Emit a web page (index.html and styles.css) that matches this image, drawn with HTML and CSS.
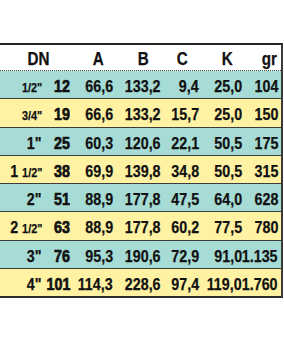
FILE: index.html
```html
<!DOCTYPE html>
<html>
<head>
<meta charset="utf-8">
<link rel="stylesheet" href="styles.css">
</head>
<body>
<div class="table">
  <div class="row head">
    <div class="h dn"><span class="n">DN</span></div>
    <div class="h ha"><span class="n">A</span></div>
    <div class="h hb"><span class="n">B</span></div>
    <div class="h hc"><span class="n">C</span></div>
    <div class="h hk"><span class="n">K</span></div>
    <div class="h hg"><span class="n">gr</span></div>
  </div>
  <div class="row teal"><div class="c inch"><span class="n"><span class="fr">1/2"</span></span></div><div class="c mm"><span class="n">12</span></div><div class="c"><span class="n">66,6</span></div><div class="c"><span class="n">133,2</span></div><div class="c"><span class="n">9,4</span></div><div class="c"><span class="n">25,0</span></div><div class="c"><span class="n">104</span></div></div>
  <div class="row yellow"><div class="c inch"><span class="n"><span class="fr">3/4"</span></span></div><div class="c mm"><span class="n">19</span></div><div class="c"><span class="n">66,6</span></div><div class="c"><span class="n">133,2</span></div><div class="c"><span class="n">15,7</span></div><div class="c"><span class="n">25,0</span></div><div class="c"><span class="n">150</span></div></div>
  <div class="row teal"><div class="c inch"><span class="n">1"</span></div><div class="c mm"><span class="n">25</span></div><div class="c"><span class="n">60,3</span></div><div class="c"><span class="n">120,6</span></div><div class="c"><span class="n">22,1</span></div><div class="c"><span class="n">50,5</span></div><div class="c"><span class="n">175</span></div></div>
  <div class="row yellow"><div class="c inch"><span class="n">1 <span class="fr">1/2"</span></span></div><div class="c mm"><span class="n">38</span></div><div class="c"><span class="n">69,9</span></div><div class="c"><span class="n">139,8</span></div><div class="c"><span class="n">34,8</span></div><div class="c"><span class="n">50,5</span></div><div class="c"><span class="n">315</span></div></div>
  <div class="row teal"><div class="c inch"><span class="n">2"</span></div><div class="c mm"><span class="n">51</span></div><div class="c"><span class="n">88,9</span></div><div class="c"><span class="n">177,8</span></div><div class="c"><span class="n">47,5</span></div><div class="c"><span class="n">64,0</span></div><div class="c"><span class="n">628</span></div></div>
  <div class="row yellow"><div class="c inch"><span class="n">2 <span class="fr">1/2"</span></span></div><div class="c mm"><span class="n">63</span></div><div class="c"><span class="n">88,9</span></div><div class="c"><span class="n">177,8</span></div><div class="c"><span class="n">60,2</span></div><div class="c"><span class="n">77,5</span></div><div class="c"><span class="n">780</span></div></div>
  <div class="row teal"><div class="c inch"><span class="n">3"</span></div><div class="c mm"><span class="n">76</span></div><div class="c"><span class="n">95,3</span></div><div class="c"><span class="n">190,6</span></div><div class="c"><span class="n">72,9</span></div><div class="c"><span class="n">91,0</span></div><div class="c"><span class="n">1.135</span></div></div>
  <div class="row yellow last"><div class="c inch"><span class="n">4"</span></div><div class="c mm"><span class="n">101</span></div><div class="c"><span class="n">114,3</span></div><div class="c"><span class="n">228,6</span></div><div class="c"><span class="n">97,4</span></div><div class="c"><span class="n">119,0</span></div><div class="c"><span class="n">1.760</span></div></div>
</div>
</body>
</html>
```
FILE: styles.css
```css
html, body {
  margin: 0;
  padding: 0;
  background: #ffffff;
}
body {
  font-family: "Liberation Sans", Arial, sans-serif;
  font-weight: bold;
  color: #111111;
}
.table {
  margin-top: 43px;
  width: 281px;
  border-top: 2px solid #232323;
  border-right: 2px solid #3a3a3a;
  border-bottom: 2px solid #2e2e2e;
}
.row {
  display: grid;
  grid-template-columns: 42px 28px 43px 48px 38px 43px 36px;
  box-sizing: border-box;
}
.head {
  height: 26px;
  background: #ffffff;
  border-bottom: 1px dotted #444444;
}
.n {
  display: inline-block;
  transform: scaleX(0.84);
  transform-origin: right center;
  white-space: nowrap;
  -webkit-text-stroke: 0.25px #111111;
}
.h .n { transform: scaleX(0.8); }
.h, .c {
  display: flex;
  justify-content: flex-end;
  align-items: flex-start;
  white-space: nowrap;
  min-width: 0;
}
.h {
  font-size: 19px;
  line-height: 21px;
  padding-top: 3px;
}
.dn { grid-column: span 2; padding-right: 21px; }
.ha { padding-right: 9px; }
.hb { padding-right: 12px; }
.hc { padding-right: 11px; }
.hk { padding-right: 9px; }
.hg { padding-right: 1px; }

.row.teal, .row.yellow {
  height: 28.25px;
  border-bottom: 1px solid #3c3c3c;
}
.row.last { border-bottom: none; height: 27.25px; }
.teal { background: #a6dcd5; }
.yellow { background: #fff3a3; }
.c {
  font-size: 17px;
  line-height: 20px;
  padding-top: 6px;
}
.mm .n { -webkit-text-stroke: 0.7px #111111; }
.fr { font-size: 13px; }
```
